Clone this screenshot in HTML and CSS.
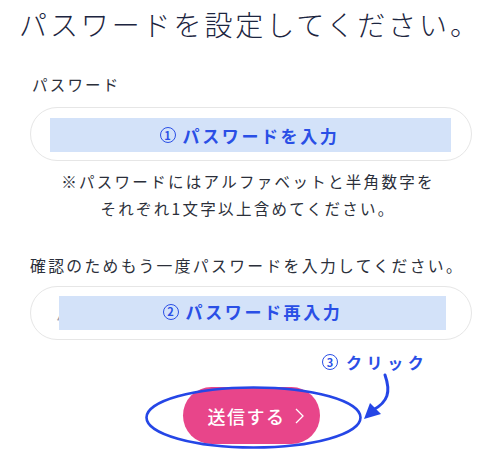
FILE: index.html
```html
<!DOCTYPE html>
<html lang="ja">
<head>
<meta charset="utf-8">
<link rel="stylesheet" href="styles.css">
</head>
<body>
<div class="page">
  <h1 class="title">パスワードを設定してください。</h1>
  <div class="form">
    <div class="label label-first">パスワード</div>
    <div class="field">
      <input class="input" type="password" placeholder="パスワード">
      <div class="mark mark-1"><span class="num">1</span>パスワードを入力</div>
    </div>
    <p class="note">※パスワードにはアルファベットと半角数字を<br>それぞれ1文字以上含めてください。</p>
    <div class="label label-second">確認のためもう一度パスワードを入力してください。</div>
    <div class="field field-second">
      <input class="input" type="password" placeholder="パスワード">
      <div class="mark mark-2"><span class="num">2</span>パスワード再入力</div>
    </div>
    <div class="click-note"><span class="num">3</span>クリック</div>
    <div class="submit-row">
      <button class="submit" type="button"><span>送信する</span>
        <svg class="chev" width="9" height="16" viewBox="0 0 9 16"><path d="M1 1 L8 8 L1 15" fill="none" stroke="#fff" stroke-width="1.3"/></svg>
      </button>
    </div>
  </div>
  <svg class="annot" width="483" height="454" viewBox="0 0 483 454">
    <ellipse cx="253.5" cy="417.5" rx="107" ry="30" fill="none" stroke="#2546e6" stroke-width="2.6"/>
    <path d="M385 375 C 391 392, 388 402, 373 410" fill="none" stroke="#2546e6" stroke-width="3" stroke-linecap="round"/>
    <polygon points="364,419 370,403 381,414" fill="#2546e6"/>
  </svg>
</div>
</body>
</html>
```
FILE: styles.css
```css
html, body {
  margin: 0;
  padding: 0;
  background: #fff;
}
body {
  font-family: "Noto Sans CJK JP", "Noto Sans", sans-serif;
  color: #2b2f3a;
}
.page {
  position: relative;
  width: 483px;
  height: 454px;
  overflow: hidden;
}
.title {
  margin: 0;
  padding: 4px 0 0 19px;
  font-size: 28px;
  line-height: 40px;
  font-weight: 300;
  letter-spacing: 2.9px;
  color: #1c2540;
  white-space: nowrap;
}
.form {
  margin-left: 30px;
  width: 442px;
  display: flex;
  flex-direction: column;
}
.label {
  font-size: 15.5px;
  line-height: 20px;
  color: #2b2f3a;
  white-space: nowrap;
}
.label-first {
  margin-top: 30px;
  padding-left: 2px;
  letter-spacing: 2.2px;
}
.label-second {
  margin-top: 34px;
  letter-spacing: 2.35px;
  font-size: 15.8px;
}
.field {
  position: relative;
  margin-top: 13px;
  height: 54px;
}
.field-second {
  margin-top: 10px;
}
.input {
  box-sizing: border-box;
  width: 100%;
  height: 54px;
  border: 1px solid #e6e6e6;
  border-radius: 27px;
  padding: 0 0 0 25px;
  font-family: inherit;
  font-size: 16px;
  background: #fff;
  outline: none;
}
.input::placeholder {
  color: #9a9aa6;
}
.num {
  display: inline-flex;
  align-items: center;
  justify-content: center;
  box-sizing: border-box;
  width: 16px;
  height: 16px;
  border: 1.6px solid currentColor;
  border-radius: 50%;
  font-size: 11px;
  font-weight: 700;
  line-height: 1;
  letter-spacing: 0;
  margin-right: 7px;
}
.mark {
  position: absolute;
  background: #d3e2f9;
  color: #2a4fe6;
  font-weight: 700;
  font-size: 17px;
  letter-spacing: 2.6px;
  display: flex;
  align-items: center;
  justify-content: center;
  white-space: nowrap;
}
.mark-1 {
  left: 20px;
  top: 11px;
  width: 401px;
  height: 34px;
  padding-right: 2px;
  box-sizing: border-box;
}
.mark-2 {
  left: 29px;
  top: 10px;
  width: 387px;
  height: 34px;
  padding-bottom: 3px;
  box-sizing: border-box;
}
.note {
  margin: 7px 0 0;
  font-size: 15.5px;
  line-height: 27px;
  letter-spacing: 2.3px;
  text-align: center;
  color: #2b2f3a;
  padding-right: 6px;
}
.click-note {
  margin-top: 12px;
  margin-left: 292px;
  font-size: 16px;
  line-height: 20px;
  font-weight: 700;
  letter-spacing: 4.6px;
  color: #2a4fe6;
  white-space: nowrap;
  display: flex;
  align-items: center;
}
.click-note .num {
  margin-right: 8px;
}
.submit-row {
  margin-top: 15px;
  display: flex;
  justify-content: center;
  padding-left: 1px;
}
.submit {
  width: 137px;
  height: 57px;
  border: none;
  border-radius: 29px;
  background: #e8458a;
  color: #fff;
  font-family: inherit;
  font-size: 18px;
  font-weight: 500;
  letter-spacing: 1.5px;
  display: flex;
  align-items: center;
  justify-content: center;
  gap: 9px;
  padding: 0 0 0 8px;
}
.chev {
  display: block;
}
.annot {
  position: absolute;
  left: 0;
  top: 0;
  pointer-events: none;
}
```
